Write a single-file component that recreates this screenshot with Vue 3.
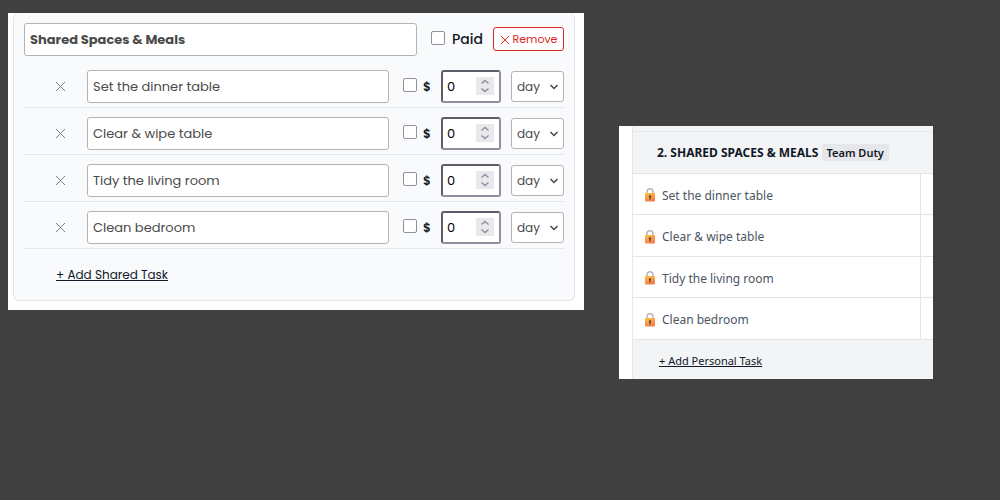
<script setup>
import { ref } from 'vue'

const groupName = ref('Shared Spaces & Meals')
const groupPaid = ref(false)
const tasks = ref([
  { name: 'Set the dinner table', paid: false, amount: 0, period: 'day' },
  { name: 'Clear & wipe table', paid: false, amount: 0, period: 'day' },
  { name: 'Tidy the living room', paid: false, amount: 0, period: 'day' },
  { name: 'Clean bedroom', paid: false, amount: 0, period: 'day' },
])

function removeTask(index) {
  tasks.value.splice(index, 1)
}

function addTask() {
  tasks.value.push({ name: '', paid: false, amount: 0, period: 'day' })
}
</script>

<template>
  <main class="page">
    <section class="panel editor">
      <div class="card">
        <header class="group-head">
          <input v-model="groupName" class="field group-name" type="text" aria-label="Group name" />
          <label class="paid"><input v-model="groupPaid" class="check" type="checkbox" /><span>Paid</span></label>
          <button class="remove" type="button">
            <svg width="10" height="10" viewBox="0 0 10 10" aria-hidden="true"><path d="M1 1l8 8M9 1l-8 8" /></svg>
            Remove
          </button>
        </header>

        <ul class="tasks">
          <li v-for="(task, i) in tasks" :key="i" class="task">
            <button class="delete" type="button" aria-label="Remove task" @click="removeTask(i)">
              <svg width="9" height="9" viewBox="0 0 9 9" aria-hidden="true"><path d="M0 0l9 9M9 0l-9 9" /></svg>
            </button>
            <input v-model="task.name" class="field task-name" type="text" aria-label="Task name" />
            <label class="money"><input v-model="task.paid" class="check" type="checkbox" /><span>$</span></label>
            <div class="amount">
              <input v-model="task.amount" type="number" min="0" aria-label="Amount" />
              <span class="spin">
                <svg width="18" height="18" viewBox="0 0 18 18" aria-hidden="true"><path d="M5.5 6.5L9 3.5l3.5 3M5.5 11.5l3.5 3 3.5-3" /></svg>
              </span>
            </div>
            <div class="period">
              <select v-model="task.period" aria-label="Period">
                <option>day</option>
                <option>week</option>
              </select>
              <svg width="10" height="10" viewBox="0 0 10 10" aria-hidden="true"><path d="M1.5 3L5 6.5 8.5 3" /></svg>
            </div>
          </li>
        </ul>

        <a class="add" href="#" @click.prevent="addTask">+ Add Shared Task</a>
      </div>
    </section>

    <section class="panel chart">
      <table>
        <thead>
          <tr class="strip"><td colspan="2"></td></tr>
          <tr>
            <th colspan="2" scope="colgroup">2. SHARED SPACES &amp; MEALS <span class="badge">Team Duty</span></th>
          </tr>
        </thead>
        <tbody>
          <tr v-for="(task, i) in tasks" :key="i">
            <td class="name">
              <div class="name-line">
                <svg width="12" height="14" viewBox="0 0 12 14" aria-hidden="true">
                  <defs>
                    <linearGradient :id="'lock' + i" x1="0" y1="0" x2="0.4" y2="1">
                      <stop offset="0" stop-color="#fbc23c" />
                      <stop offset="1" stop-color="#f2804e" />
                    </linearGradient>
                  </defs>
                  <path d="M3 6V3.8a3 3 0 0 1 6 0V6" stroke="#b9b3c2" stroke-width="1.5" />
                  <rect x="1" y="5" width="10" height="8.5" rx="1" :fill="`url(#lock${i})`" />
                  <path class="keyhole" d="M6 7.2a1.2 1.2 0 0 1 .6 2.2V11.4H5.4V9.4A1.2 1.2 0 0 1 6 7.2z" />
                </svg>
                {{ task.name }}
              </div>
            </td>
            <td class="day"></td>
          </tr>
        </tbody>
        <tfoot>
          <tr>
            <td colspan="2"><a href="#">+ Add Personal Task</a></td>
          </tr>
        </tfoot>
      </table>
    </section>
  </main>
</template>

<style>
body {
  background: #404040;
}
</style>

<style scoped>
* {
  box-sizing: border-box;
}

.page {
  display: grid;
  grid-template-columns: 576fr 314fr;
  column-gap: 35px;
  align-items: start;
  padding: 13px 67px 0 8px;
}

.panel {
  background: #fff;
}

input,
select,
button {
  margin: 0;
  font-family: inherit;
}

svg path {
  fill: none;
}

.editor {
  padding: 0 9px 9px 5px;
  font-family: Poppins, Inter, sans-serif;
}

.card {
  padding: 10px 10px 14px;
  background: #f9fafc;
  border: 1px solid #e3e4e9;
  border-top: 0;
  border-radius: 6px;
}

.group-head {
  display: flex;
  align-items: center;
}

.field {
  flex: 1;
  min-width: 0;
  height: 33px;
  padding: 0 5px;
  background: #fff;
  border: 1px solid #b3b3b3;
  border-radius: 3px;
  color: #4a4a4a;
  font-size: 13px;
}

.group-name {
  font-weight: 700;
}

.check {
  width: 14px;
  height: 14px;
  margin-bottom: 3px;
  appearance: none;
  background: #fff;
  border: 1px solid #8f8f9d;
  border-radius: 2px;
}

.check:checked {
  background: #3b6fd6;
}

.paid {
  display: flex;
  align-items: center;
  gap: 7px;
  margin: 0 10px 0 14px;
  color: #111827;
  font-size: 14px;
  font-weight: 500;
}

.remove {
  display: flex;
  align-items: center;
  justify-content: center;
  gap: 3px;
  width: 71px;
  height: 24px;
  margin-bottom: 1px;
  padding: 1px 0 0;
  background: #fff;
  border: 1px solid #dc2626;
  border-radius: 3px;
  color: #dc2626;
  font-size: 11px;
}

.remove path {
  stroke: #dc2626;
}

.tasks {
  margin: 5px 0 0;
  padding: 0;
  list-style: none;
}

.task {
  display: flex;
  align-items: center;
  padding: 9px 0 4px;
  border-bottom: 1px solid #e5e7eb;
}

.delete {
  display: flex;
  justify-content: center;
  width: 17px;
  margin: 0 18px 0 28px;
  padding: 4px;
  background: none;
  border: 0;
}

.delete path {
  stroke: #748092;
}

.money {
  display: flex;
  align-items: center;
  gap: 6px;
  width: 38px;
  margin-left: 14px;
  color: #111827;
  font-size: 12px;
  font-weight: 600;
}

.amount {
  position: relative;
  width: 60px;
  margin-right: 10px;
}

.amount input {
  display: block;
  width: 100%;
  height: 33px;
  padding: 0 4px;
  appearance: textfield;
  background: #fff;
  border: 2px solid;
  border-color: #5e5e68 #8f8f9d #8f8f9d #5e5e68;
  border-radius: 3px;
  color: #000;
  font-size: 13px;
}

.amount input::-webkit-inner-spin-button {
  display: none;
}

.spin {
  position: absolute;
  top: 7px;
  right: 7px;
  display: flex;
  background: #e9e9ed;
  pointer-events: none;
}

.spin path {
  stroke: #8f8f9d;
  stroke-width: 1.5;
}

.period {
  position: relative;
  width: 53px;
}

.period select {
  display: block;
  width: 100%;
  height: 31px;
  padding: 0 5px;
  appearance: none;
  background: #fff;
  border: 1px solid #b3b3b3;
  border-radius: 3px;
  color: #4a4a4a;
  font-size: 12px;
}

.period svg {
  position: absolute;
  top: 11px;
  right: 5px;
  pointer-events: none;
}

.period path {
  stroke: #45454c;
  stroke-width: 1.5;
}

.add {
  display: inline-block;
  margin: 16px 0 0 32px;
  color: #111827;
  font-size: 12px;
  line-height: 20px;
}

.chart {
  margin-top: 113px;
  padding-left: 13px;
  font-family: "Segoe UI", "Noto Sans", sans-serif;
}

table {
  width: 100%;
  border-collapse: separate;
  border-spacing: 0;
  border-left: 1px solid #e5e7eb;
}

td,
th {
  padding: 0;
  border-bottom: 1px solid #e2e4e8;
}

.strip td {
  height: 6px;
  background: #f3f4f6;
  border-color: #e8eaed;
}

th {
  height: 42px;
  padding-left: 24px;
  background: #f3f4f6;
  color: #111827;
  font-size: 12px;
  font-weight: 700;
  text-align: left;
  white-space: nowrap;
}

.badge {
  display: inline-block;
  padding: 0 5px;
  background: #e5e7eb;
  border-radius: 3px;
  font-size: 11px;
  font-weight: 600;
  line-height: 17px;
}

.name {
  height: 41px;
  padding: 2px 0 0 11px;
  border-right: 1px solid #e2e4e8;
  color: #4b5563;
  font-size: 12px;
}

tr:nth-child(even) .name {
  height: 42px;
}

.name-line {
  display: flex;
  align-items: center;
  gap: 6px;
}

.name-line .keyhole {
  fill: #5a3d4d;
}

.day {
  width: 12px;
}

tfoot td {
  height: 39px;
  padding: 2px 0 0 26px;
  background: #f3f4f6;
  border: 0;
  font-size: 11px;
}

tfoot a {
  color: #111827;
}
</style>
